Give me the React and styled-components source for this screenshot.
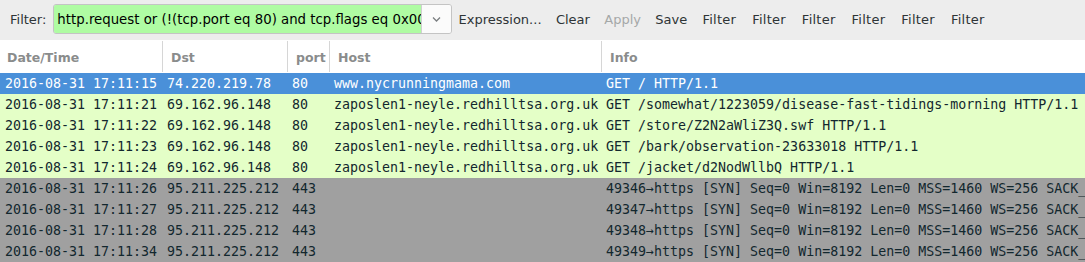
import React from "react";
import styled, { createGlobalStyle } from "styled-components";

const Global = createGlobalStyle`
  html, body { margin: 0; padding: 0; background: #ffffff; overflow: hidden; }
  body { width: 1085px; height: 262px; }
`;

const Page = styled.div`
  width: 1085px;
  height: 262px;
  display: flex;
  flex-direction: column;
  overflow: hidden;
  background: #ffffff;
`;

const Toolbar = styled.div`
  height: 40px;
  flex: none;
  background: #ededed;
  display: flex;
  align-items: center;
  padding: 0 0 0 10px;
  font-family: "DejaVu Sans", sans-serif;
  font-size: 13px;
  color: #2e3436;
  box-sizing: border-box;
`;

const Label = styled.span`
  margin-right: 7px;
  position: relative;
  top: -1px;
`;

const Combo = styled.div`
  display: flex;
  height: 30px;
  width: 399px;
  margin-top: -2px;
  border: 1px solid #c4c4c4;
  border-radius: 3px;
  overflow: hidden;
  box-sizing: border-box;
`;

const Entry = styled.div`
  flex: 1;
  background: #affca3;
  display: flex;
  align-items: center;
  padding-left: 3px;
  white-space: nowrap;
  overflow: hidden;
  color: #000;
  font-size: 13.3px;
`;

const DropButton = styled.div`
  width: 29px;
  flex: none;
  background: #fbfbfb;
  border-left: 1px solid #d0d0d0;
  display: flex;
  align-items: center;
  justify-content: center;
`;

const Buttons = styled.div`
  display: flex;
  align-items: center;
  margin-left: -1px;
  position: relative;
  top: -1px;
`;

const ToolButton = styled.span`
  padding: 0 ${(p) => (p.$wide ? "8px" : "7.2px")};
  letter-spacing: ${(p) => (p.$wide ? "0.25px" : "0")};
  color: ${(p) => (p.$disabled ? "#a5a8a8" : "#2e3436")};
  white-space: nowrap;
`;

const COLS = "162px 125px 42px 272px 1fr";

const HeaderRow = styled.div`
  display: grid;
  grid-template-columns: ${COLS};
  height: 33px;
  flex: none;
  background: #ffffff;
  font-family: "DejaVu Sans", sans-serif;
  font-weight: bold;
  font-size: 12.5px;
  color: #8a8c8c;
`;

const HeaderCell = styled.div`
  display: flex;
  align-items: center;
  padding-top: 1px;
  padding-left: ${(p) => (p.$first ? "7px" : "8px")};
  overflow: hidden;
  white-space: nowrap;
  border-left: ${(p) => (p.$first ? "none" : "1px solid #d6d6d6")};
  margin: 1px 0 1px;
`;

const Row = styled.div`
  display: grid;
  grid-template-columns: ${COLS};
  height: 21px;
  flex: none;
  background: ${(p) => p.$bg};
  color: ${(p) => p.$fg};
  font-family: "DejaVu Sans Mono", monospace;
  font-size: 13.3px;
`;

const Cell = styled.div`
  display: flex;
  align-items: center;
  padding-left: 5px;
  overflow: hidden;
  white-space: pre;
`;

const STYLES = {
  sel: { bg: "#4a90d9", fg: "#ffffff" },
  http: { bg: "#e4ffc7", fg: "#12272e" },
  syn: { bg: "#a0a0a0", fg: "#12272e" },
};

const ROWS = [
  ["sel", "2016-08-31 17:11:15", "74.220.219.78", "80", "www.nycrunningmama.com", "GET / HTTP/1.1"],
  ["http", "2016-08-31 17:11:21", "69.162.96.148", "80", "zaposlen1-neyle.redhilltsa.org.uk", "GET /somewhat/1223059/disease-fast-tidings-morning HTTP/1.1"],
  ["http", "2016-08-31 17:11:22", "69.162.96.148", "80", "zaposlen1-neyle.redhilltsa.org.uk", "GET /store/Z2N2aWliZ3Q.swf HTTP/1.1"],
  ["http", "2016-08-31 17:11:23", "69.162.96.148", "80", "zaposlen1-neyle.redhilltsa.org.uk", "GET /bark/observation-23633018 HTTP/1.1"],
  ["http", "2016-08-31 17:11:24", "69.162.96.148", "80", "zaposlen1-neyle.redhilltsa.org.uk", "GET /jacket/d2NodWllbQ HTTP/1.1"],
  ["syn", "2016-08-31 17:11:26", "95.211.225.212", "443", "", "49346\u2192https [SYN] Seq=0 Win=8192 Len=0 MSS=1460 WS=256 SACK_PERM=1"],
  ["syn", "2016-08-31 17:11:27", "95.211.225.212", "443", "", "49347\u2192https [SYN] Seq=0 Win=8192 Len=0 MSS=1460 WS=256 SACK_PERM=1"],
  ["syn", "2016-08-31 17:11:28", "95.211.225.212", "443", "", "49348\u2192https [SYN] Seq=0 Win=8192 Len=0 MSS=1460 WS=256 SACK_PERM=1"],
  ["syn", "2016-08-31 17:11:34", "95.211.225.212", "443", "", "49349\u2192https [SYN] Seq=0 Win=8192 Len=0 MSS=1460 WS=256 SACK_PERM=1"],
];

const Chevron = () => (
  <svg width="11" height="7" viewBox="0 0 11 7">
    <path d="M2 1.5 L5.5 5 L9 1.5" fill="none" stroke="#7a7e80" strokeWidth="1.3" />
  </svg>
);

export default function App() {
  return (
    <Page>
      <Global />
      <Toolbar>
        <Label>Filter:</Label>
        <Combo>
          <Entry>http.request or (!(tcp.port eq 80) and tcp.flags eq 0x002)</Entry>
          <DropButton>
            <Chevron />
          </DropButton>
        </Combo>
        <Buttons>
          <ToolButton>Expression...</ToolButton>
          <ToolButton>Clear</ToolButton>
          <ToolButton $disabled>Apply</ToolButton>
          <ToolButton>Save</ToolButton>
          <ToolButton $wide>Filter</ToolButton>
          <ToolButton $wide>Filter</ToolButton>
          <ToolButton $wide>Filter</ToolButton>
          <ToolButton $wide>Filter</ToolButton>
          <ToolButton $wide>Filter</ToolButton>
          <ToolButton $wide>Filter</ToolButton>
        </Buttons>
      </Toolbar>
      <HeaderRow>
        <HeaderCell $first>Date/Time</HeaderCell>
        <HeaderCell>Dst</HeaderCell>
        <HeaderCell>port</HeaderCell>
        <HeaderCell>Host</HeaderCell>
        <HeaderCell>Info</HeaderCell>
      </HeaderRow>
      {ROWS.map(([kind, time, dst, port, host, info], i) => (
        <Row key={i} $bg={STYLES[kind].bg} $fg={STYLES[kind].fg}>
          <Cell>{time}</Cell>
          <Cell>{dst}</Cell>
          <Cell>{port}</Cell>
          <Cell>{host}</Cell>
          <Cell>{info}</Cell>
        </Row>
      ))}
    </Page>
  );
}
